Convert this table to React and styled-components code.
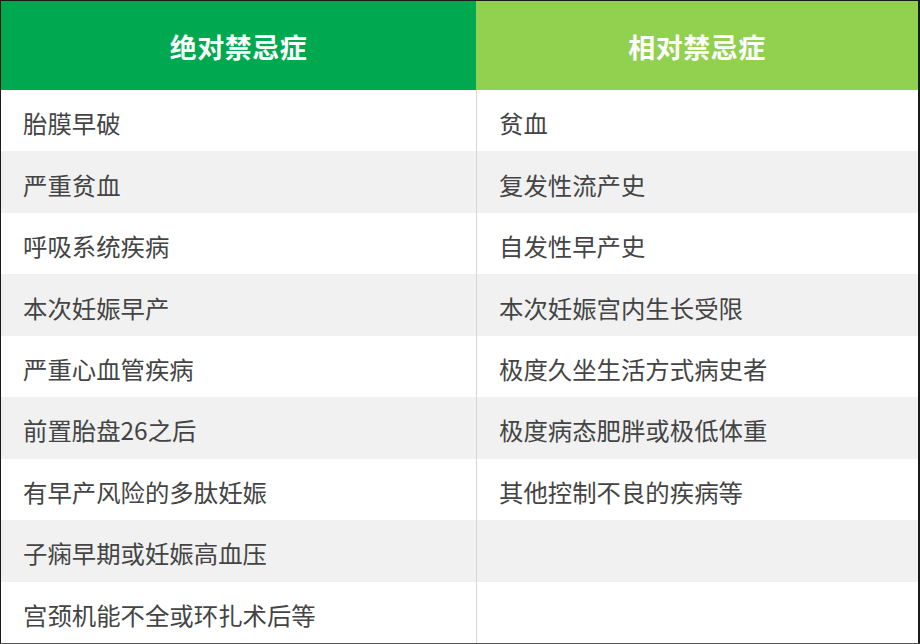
import * as React from 'react';
import styled, { createGlobalStyle } from 'styled-components';

const GlobalStyle = createGlobalStyle`
  html, body {
    margin: 0;
    padding: 0;
    background: #fff;
  }
  body {
    font-family: "Noto Sans CJK SC", "Noto Sans", sans-serif;
  }
`;

const Table = styled.div`
  box-sizing: border-box;
  width: 920px;
  height: 644px;
  display: grid;
  grid-template-columns: 475px 1fr;
  grid-template-rows: 89px repeat(9, 1fr);
  border-top: 1px solid #1a1a1a;
  border-left: 1px solid #1a1a1a;
  border-right: 2px solid #1a1a1a;
  border-bottom: 1px solid #555;
  background: #fff;
`;

const HeadCell = styled.div`
  display: flex;
  align-items: center;
  justify-content: center;
  padding-top: 2px;
  background: ${(p) => (p.$light ? '#92d050' : '#00a94f')};
  color: #fff;
  font-size: 27px;
  font-weight: 700;
  letter-spacing: 0.5px;
`;

const Cell = styled.div`
  display: flex;
  align-items: center;
  padding-left: 22px;
  padding-top: 4px;
  background: ${(p) => (p.$striped ? '#f1f1f1' : '#fff')};
  color: #444;
  font-size: 24.4px;
  border-left: ${(p) => (p.$right ? '1px solid #d6d6d6' : 'none')};
`;

const absolute = [
  '胎膜早破',
  '严重贫血',
  '呼吸系统疾病',
  '本次妊娠早产',
  '严重心血管疾病',
  '前置胎盘26之后',
  '有早产风险的多肽妊娠',
  '子痫早期或妊娠高血压',
  '宫颈机能不全或环扎术后等',
];

const relative = [
  '贫血',
  '复发性流产史',
  '自发性早产史',
  '本次妊娠宫内生长受限',
  '极度久坐生活方式病史者',
  '极度病态肥胖或极低体重',
  '其他控制不良的疾病等',
  '',
  '',
];

export default function App() {
  return (
    <>
      <GlobalStyle />
      <Table>
        <HeadCell>绝对禁忌症</HeadCell>
        <HeadCell $light>相对禁忌症</HeadCell>
        {absolute.map((item, i) => (
          <React.Fragment key={i}>
            <Cell $striped={i % 2 === 1}>{item}</Cell>
            <Cell $striped={i % 2 === 1} $right>
              {relative[i]}
            </Cell>
          </React.Fragment>
        ))}
      </Table>
    </>
  );
}
